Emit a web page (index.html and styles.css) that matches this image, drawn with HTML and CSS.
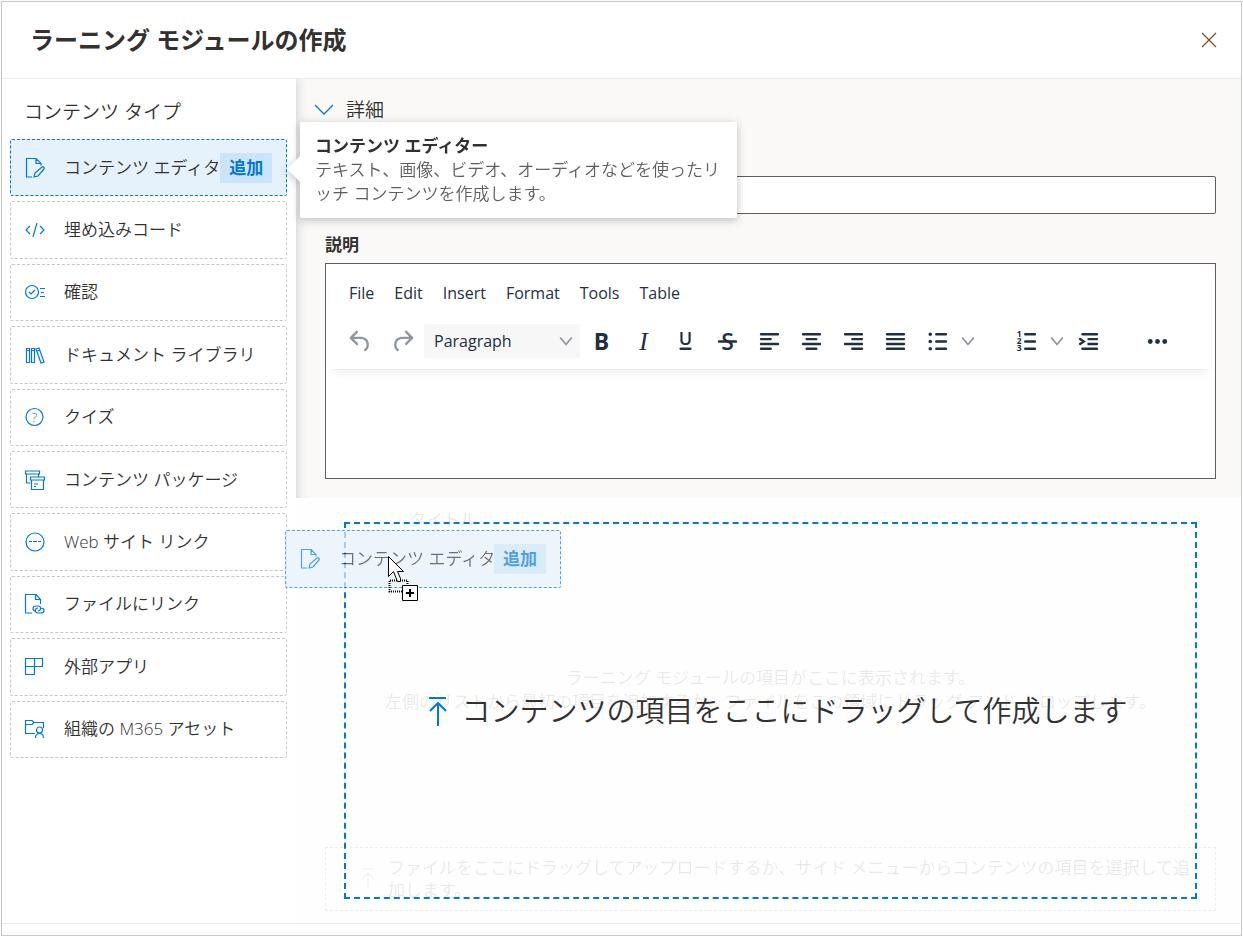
FILE: index.html
```html
<!DOCTYPE html>
<html lang="ja">
<head>
    <meta charset="UTF-8">
    <meta name="viewport" content="width=device-width, initial-scale=1.0">
    <title>ラーニング モジュールの作成</title>
    <link rel="stylesheet" href="styles.css">
</head>
<body>

    <div class="dialog">

        <header class="dialog-header">
            <h1>ラーニング モジュールの作成</h1>
            <button class="close" aria-label="閉じる">
                <svg width="16" height="16" viewBox="0 0 16 16"><path d="M1 1l14 14M15 1L1 15"/></svg>
            </button>
        </header>

        <div class="dialog-body">

            <!-- Content types -->
            <nav class="sidebar">
                <h2>コンテンツ タイプ</h2>
                <ul class="type-list">
                    <li class="type active">
                        <svg class="icon" viewBox="0 0 20 20"><path d="M7 19H1.5V.5H11l5 5v2M11 .5v5h5M9 19l1-4 7-6c1-1 3 1 2 2l-6 7z"/></svg>
                        <button class="type-name">コンテンツ エディター</button>
                        <button class="add">追加</button>
                    </li>
                    <li class="type">
                        <svg class="icon" viewBox="0 0 20 20"><path d="M5 6l-4 4 4 4M15 6l4 4-4 4M12 3L8 17"/></svg>
                        <button class="type-name">埋め込みコード</button>
                    </li>
                    <li class="type">
                        <svg class="icon" viewBox="0 0 20 20"><circle cx="7" cy="10" r="6.5"/><path d="M4 10l2 2 4-4M15 6.500h5M16 10.500h3M15 14.500h5"/></svg>
                        <button class="type-name">確認</button>
                    </li>
                    <li class="type">
                        <svg class="icon" viewBox="0 0 20 20"><path d="M1.5 3.5h3v14h-3zM6.5 3.5h3v14h-3zM11 4l3-1 5 14-3 1zM1.5 5.5h3M6.5 5.5h3M12 6l3-1"/></svg>
                        <button class="type-name">ドキュメント ライブラリ</button>
                    </li>
                    <li class="type">
                        <svg class="icon" viewBox="0 0 20 20"><circle cx="9.5" cy="10" r="8.5"/><text x="9.5" y="15" font-size="13">?</text></svg>
                        <button class="type-name">クイズ</button>
                    </li>
                    <li class="type">
                        <svg class="icon" viewBox="0 0 20 20"><path d="M.5 1h14v3H.5zM1.5 4v9h4M13.5 4v3M5.5 7h14v3h-14zM6.5 10v9.5h12V10M9 14h4M9 16.5h2"/></svg>
                        <button class="type-name">コンテンツ パッケージ</button>
                    </li>
                    <li class="type">
                        <svg class="icon" viewBox="0 0 20 20"><circle cx="10" cy="10" r="9"/><path d="M4 9.5h3M8 9.5h4M13 9.5h3"/></svg>
                        <button class="type-name">Web サイト リンク</button>
                    </li>
                    <li class="type">
                        <svg class="icon" viewBox="0 0 20 20"><path d="M7 19H.5V.5H11l4.5 5V10M10.5 .5v5h5"/><path d="M11 17c-4 0-4-5 0-5h2c4 0 3 5 0 5M16 14c4 0 4 5 0 5h-3c-4 0-3-5 0-5"/></svg>
                        <button class="type-name">ファイルにリンク</button>
                    </li>
                    <li class="type">
                        <svg class="icon" viewBox="0 0 20 20"><path d="M.5 1.5h17v8H.5zM.5 9.5h9v8h-9zM9.5 1.5v8"/></svg>
                        <button class="type-name">外部アプリ</button>
                    </li>
                    <li class="type">
                        <svg class="icon" viewBox="0 0 20 20"><path d="M10 14.5H.5v-13H7l2 2h9.5V9M.5 5.5H7l2-2"/><circle cx="14.5" cy="11" r="3"/><path d="M10.5 19c0-6 8-6 8 0"/></svg>
                        <button class="type-name">組織の M365 アセット</button>
                    </li>
                </ul>
            </nav>

            <main class="main">

                <!-- Details form -->
                <section class="details">
                    <button class="toggle" aria-expanded="true">
                        <svg width="20" height="12" viewBox="0 0 20 12"><path d="M1 1l9 9 9-9"/></svg>
                        詳細
                    </button>

                    <label for="moduleTitle">タイトル</label>
                    <input type="text" id="moduleTitle">

                    <label for="description">説明</label>
                    <div class="editor">
                        <div class="editor-header">
                            <div class="menubar">
                                <button>File</button>
                                <button>Edit</button>
                                <button>Insert</button>
                                <button>Format</button>
                                <button>Tools</button>
                                <button>Table</button>
                            </div>
                            <div class="toolbar">
                                <div class="group">
                                    <button class="tool muted" aria-label="Undo"><svg viewBox="0 0 24 24"><path d="M6.4 8H12c3.7 0 6.2 2 6.8 5.1.6 2.7-.4 5.6-2.3 6.8a1 1 0 01-1-1.8c1.1-.6 1.8-2.7 1.4-4.6-.5-2.1-2.1-3.5-4.9-3.5H6.4l3.3 3.3a1 1 0 11-1.4 1.4l-5-5a1 1 0 010-1.4l5-5a1 1 0 011.4 1.4L6.4 8z"/></svg></button>
                                    <button class="tool muted" aria-label="Redo"><svg viewBox="0 0 24 24"><path d="M17.6 10H12c-2.8 0-4.4 1.4-4.9 3.5-.4 2 .3 4 1.4 4.6a1 1 0 11-1 1.8c-2-1.2-2.9-4.1-2.3-6.8.6-3 3-5.1 6.8-5.1h5.6l-3.3-3.3a1 1 0 111.4-1.4l5 5a1 1 0 010 1.4l-5 5a1 1 0 01-1.4-1.4l3.3-3.3z"/></svg></button>
                                    <span class="format">
                                        <select aria-label="Block format">
                                            <option>Paragraph</option>
                                        </select>
                                        <svg class="chevron" viewBox="0 0 12 12"><path d="M1 3l5 6 5-6"/></svg>
                                    </span>
                                    <button class="tool" aria-label="Bold"><svg viewBox="0 0 24 24"><text x="12" y="19" font-size="19">B</text></svg></button>
                                    <button class="tool" aria-label="Italic"><svg viewBox="0 0 24 24"><text class="italic" x="12" y="19" font-size="21">I</text></svg></button>
                                    <button class="tool" aria-label="Underline"><svg viewBox="0 0 24 24"><text class="semi" x="12" y="15" font-size="15">U</text><path d="M8 17h8a1 1 0 010 2H8a1 1 0 010-2z"/></svg></button>
                                    <button class="tool" aria-label="Strikethrough"><svg viewBox="0 0 24 24"><text class="semi" x="12" y="19" font-size="19">S</text><path d="M5 11h14a1 1 0 010 2H5a1 1 0 010-2z"/></svg></button>
                                    <button class="tool" aria-label="Align left"><svg class="lines" viewBox="0 0 24 24"><path d="M5 6h14M5 10h8M5 14h14M5 18h8"/></svg></button>
                                    <button class="tool" aria-label="Align center"><svg class="lines" viewBox="0 0 24 24"><path d="M5 6h14M8 10h8M5 14h14M8 18h8"/></svg></button>
                                    <button class="tool" aria-label="Align right"><svg class="lines" viewBox="0 0 24 24"><path d="M5 6h14M11 10h8M5 14h14M11 18h8"/></svg></button>
                                    <button class="tool" aria-label="Justify"><svg class="lines" viewBox="0 0 24 24"><path d="M5 6h14M5 10h14M5 14h14M5 18h14"/></svg></button>
                                    <button class="tool" aria-label="Bullet list"><svg class="lines" viewBox="0 0 24 24"><path d="M11 6h8M11 12h8M11 18h8"/><path class="dots" d="M6 6h0M6 12h0M6 18h0"/></svg></button>
                                    <button class="more" aria-label="Bullet styles"><svg class="chevron" viewBox="0 0 12 12"><path d="M1 3l5 6 5-6"/></svg></button>
                                </div>
                                <div class="group">
                                    <button class="tool" aria-label="Numbered list"><svg class="lines" viewBox="0 0 24 24"><path d="M11 6h8M11 12h8M11 18h8"/><text x="6" y="8" font-size="7">1</text><text x="6" y="14" font-size="7">2</text><text x="6" y="20" font-size="7">3</text></svg></button>
                                    <button class="more" aria-label="Number styles"><svg class="chevron" viewBox="0 0 12 12"><path d="M1 3l5 6 5-6"/></svg></button>
                                    <button class="tool" aria-label="Increase indent"><svg class="lines" viewBox="0 0 24 24"><path d="M7 6h12M12 10h7M12 14h7M7 18h12M5 10l3 2-3 2"/></svg></button>
                                </div>
                                <div class="group">
                                    <button class="tool" aria-label="More"><svg viewBox="0 0 24 24"><circle cx="6" cy="12" r="2"/><circle cx="12" cy="12" r="2"/><circle cx="18" cy="12" r="2"/></svg></button>
                                </div>
                            </div>
                        </div>
                        <textarea id="description"></textarea>
                    </div>
                </section>

                <!-- Module items and the drop target over them -->
                <section class="items">
                    <div class="items-head">タイトル</div>
                    <div class="items-empty">
                        <p>ラーニング モジュールの項目がここに表示されます。</p>
                        <p>左側のリストから最初の項目を追加するか、ファイルをこの領域にドラッグ アンド ドロップします。</p>
                    </div>
                    <div class="upload">
                        <svg width="16" height="22" viewBox="0 0 16 22"><path d="M2 1h12M8 21V5M2 11l6-6 6 6"/></svg>
                        <p>ファイルをここにドラッグしてアップロードするか、サイド メニューからコンテンツの項目を選択して追加します。</p>
                    </div>
                    <div class="drop-target">
                        <svg width="48" height="32" viewBox="0 0 48 32"><path d="M16 3h17M25 31V8M17 16l8-8 8 8"/></svg>
                        <p>コンテンツの項目をここにドラッグして作成します</p>
                    </div>
                </section>

            </main>
        </div>

        <footer class="dialog-footer"></footer>

        <div class="tooltip" role="tooltip">
            <b>コンテンツ エディター</b>
            <p>テキスト、画像、ビデオ、オーディオなどを使ったリッチ コンテンツを作成します。</p>
        </div>

        <!-- Item being dragged -->
        <div class="type active ghost">
            <svg class="icon" viewBox="0 0 20 20"><path d="M7 19H1.5V.5H11l5 5v2M11 .5v5h5M9 19l1-4 7-6c1-1 3 1 2 2l-6 7z"/></svg>
            <span class="type-name">コンテンツ エディター</span>
            <span class="add">追加</span>
        </div>
        <svg class="cursor" width="34" height="48" viewBox="0 0 34 48">
            <path class="outline" d="M3 24.500h17.500v11H2.500v-11"/>
            <path class="arrow" d="M1.5 .5v20l5-5 4 10h3v-3l-3-7h6z"/>
            <path class="badge" d="M15.500 29.500h15v15h-15z"/>
            <path class="plus" d="M19 37h8M23 33v8"/>
        </svg>

    </div>

</body>
</html>
```
FILE: styles.css
```css
* {
    box-sizing: border-box;
}

body {
    margin: 0;
    padding: 1px;
    background-color: white;
    color: #323130;
    font-family: "Open Sans", "Noto Sans CJK JP", sans-serif;
    font-size: 17px;
    font-weight: 350;
    line-height: 24px;
}

h1, h2, p, ul {
    margin: 0;
    padding: 0;
}

button, input, textarea, select {
    font: inherit;
    color: inherit;
    border: none;
    background: none;
    padding: 0;
}

button {
    cursor: pointer;
}

svg {
    flex: none;
    overflow: visible;
    fill: none;
    stroke: #0078d4;
}

svg text {
    fill: #0078d4;
    stroke: none;
    text-anchor: middle;
}

/* Dialog frame */
.dialog {
    position: relative;
    display: flex;
    flex-direction: column;
    min-height: calc(100vh - 2px);
    border: 1px solid #c8c8c8;
}

.dialog-header {
    display: flex;
    align-items: center;
    justify-content: space-between;
    height: 77px;
    padding: 0 24px 0 28px;
    border-bottom: 1px solid #edebe9;
}

h1 {
    font-size: 24px;
    font-weight: 700;
    line-height: 32px;
}

.close {
    display: flex;
}

.close svg {
    stroke: #8a4b1c;
    stroke-width: 1.3;
}

.dialog-body {
    flex: 1;
    display: flex;
}

.dialog-footer {
    height: 12px;
    border-top: 1px solid #edebe9;
}

/* Sidebar */
.sidebar {
    position: relative;
    z-index: 1;
    flex: none;
    width: 294px;
    padding: 17px 10px 0 8px;
    background-color: white;
    box-shadow: 0 0 12px rgba(0, 0, 0, 0.2);
    clip-path: inset(0 -20px 0 0);
}

h2 {
    padding: 0 14px;
    font-size: 19px;
    font-weight: 350;
    line-height: 32px;
}

.type-list {
    display: grid;
    grid-auto-rows: 1fr;
    gap: 5px;
    min-height: 619px;
    margin-top: 11px;
    list-style: none;
}

.type {
    display: flex;
    align-items: center;
    padding: 0 14px;
    border: 1px dashed #c8c6c4;
    border-radius: 2px;
}

.type.active {
    border-color: #0078d4;
    background-color: #e5f1fb;
}

.icon {
    width: 20px;
    height: 20px;
    margin-right: 19px;
    stroke-width: 1.2;
}

.type-name {
    flex: 1;
    overflow: hidden;
    text-align: left;
    white-space: nowrap;
}

.add {
    padding: 3px 9px;
    background-color: #cce4f7;
    color: #0078d4;
    font-weight: 700;
}

/* Details form */
.main {
    flex: 1;
    min-width: 0;
    display: flex;
    flex-direction: column;
}

.details {
    display: flex;
    flex-direction: column;
    padding: 17px 25px 19px 29px;
    background-color: #faf9f8;
}

.toggle {
    display: flex;
    align-items: center;
    gap: 12px;
    align-self: flex-start;
    margin-left: -11px;
    margin-bottom: 3px;
    font-size: 19px;
    line-height: 28px;
}

.toggle svg {
    stroke-width: 1.3;
}

label {
    margin: 19px 0 6px;
    font-weight: 700;
}

#moduleTitle {
    height: 38px;
    padding: 0 10px;
    border: 1px solid #605e5c;
    border-radius: 2px;
    background-color: white;
}

/* Rich text editor */
.editor {
    display: flex;
    flex-direction: column;
    border: 1px solid #605e5c;
    background-color: white;
    color: #222f3e;
    font-size: 16px;
    font-weight: 400;
}

.editor-header {
    margin: 0 4px;
    padding: 11px 9px 7px;
    box-shadow: 0 2px 2px -2px rgba(34, 47, 62, 0.1), 0 8px 8px -4px rgba(34, 47, 62, 0.07);
}

.menubar {
    display: flex;
    gap: 20px;
    padding: 0 10px;
    line-height: 36px;
}

.toolbar {
    display: flex;
    gap: 27px;
    margin-top: 9px;
}

.group {
    display: flex;
    align-items: center;
}

.tool {
    display: flex;
    align-items: center;
    justify-content: center;
    width: 42px;
    height: 42px;
}

.tool svg {
    width: 29px;
    height: 29px;
    fill: #222f3e;
    stroke: none;
}

.tool.muted svg {
    fill: #8f969d;
}

.tool text {
    fill: #222f3e;
    font-weight: 700;
}

.tool text.semi {
    font-weight: 600;
}

.tool text.italic {
    font-family: "Liberation Serif", serif;
    font-style: italic;
    font-weight: 400;
}

.tool .lines path {
    fill: none;
    stroke: #222f3e;
    stroke-width: 2;
    stroke-linecap: round;
}

.tool .lines .dots {
    stroke-width: 3;
}

.more {
    display: flex;
    justify-content: center;
    width: 20px;
}

.chevron {
    width: 14px;
    height: 14px;
    stroke: #8f969d;
    stroke-width: 1.5;
}

.format {
    position: relative;
    width: 156px;
    margin-left: 1px;
}

.format select {
    appearance: none;
    display: block;
    width: 100%;
    height: 34px;
    padding: 0 10px;
    border-radius: 3px;
    background-color: #f7f7f7;
}

.format .chevron {
    position: absolute;
    top: 10px;
    right: 7px;
    pointer-events: none;
}

textarea {
    height: 109px;
    padding: 10px;
    resize: none;
}

/* Module items */
.items {
    position: relative;
    z-index: 2;
    flex: 1;
    display: flex;
    flex-direction: column;
    padding: 10px 25px 12px 29px;
    background-color: #fefefe;
}

.items-head {
    padding-left: 84px;
    opacity: 0.1;
}

.items-empty {
    flex: 1;
    display: flex;
    flex-direction: column;
    justify-content: center;
    text-align: center;
    opacity: 0.1;
}

.upload {
    display: flex;
    align-items: center;
    gap: 12px;
    padding: 9px 15px 9px 34px;
    border: 1px dashed #0078d4;
    line-height: 22px;
    opacity: 0.1;
}

.drop-target {
    position: absolute;
    top: 24px;
    right: 44px;
    bottom: 24px;
    left: 48px;
    display: flex;
    align-items: center;
    justify-content: center;
    border: 2px dashed #0078d4;
    font-size: 29px;
    line-height: 40px;
}

.drop-target svg {
    stroke-width: 2;
}

/* Tooltip of the first content type */
.tooltip {
    position: absolute;
    z-index: 3;
    top: 120px;
    left: 298px;
    width: 437px;
    padding: 12px 13px 12px 15px;
    border-radius: 2px;
    background-color: white;
    color: #605e5c;
    filter: drop-shadow(0 2px 4px rgba(0, 0, 0, 0.25));
}

.tooltip b {
    color: #323130;
    font-weight: 700;
}

.tooltip::before {
    content: "";
    position: absolute;
    top: 33px;
    left: -13px;
    border: 14px solid transparent;
    border-left-width: 0;
    border-right-color: white;
}

/* Drag feedback */
.ghost {
    position: absolute;
    z-index: 4;
    top: 528px;
    left: 283px;
    width: 276px;
    height: 58px;
    opacity: 0.7;
}

.cursor {
    position: absolute;
    z-index: 5;
    top: 554px;
    left: 385px;
}

.cursor path {
    fill: white;
    stroke: black;
}

.cursor .outline {
    fill: none;
    stroke-width: 2;
    stroke-dasharray: 1 1;
}

.cursor .plus {
    stroke-width: 2;
}
```
